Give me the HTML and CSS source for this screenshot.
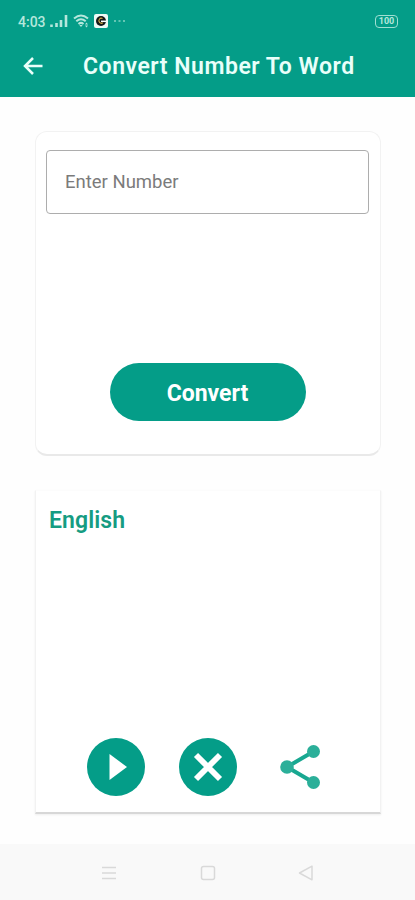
FILE: index.html
```html
<!DOCTYPE html>
<html lang="en">
<head>
<meta charset="utf-8">
<title>Convert Number To Word</title>
<link rel="stylesheet" href="styles.css">
</head>
<body>
<header class="header">
  <div class="status">
    <span class="time">4:03</span>
    <svg class="signal" width="18" height="14" viewBox="0 0 18 14"><path d="M1.500 10.500v2.500M6.500 9v4M11 6v7M16 1v12" stroke="#b5e7dc" stroke-width="2.600"/></svg>
    <svg class="wifi" width="17" height="14" viewBox="0 0 17 14"><g fill="none" stroke="#b5e7dc" stroke-width="2"><path d="M1 4.500Q8 -1.500 15 4.500M3.300 7.300Q8 3.200 12.700 7.300M5.500 10Q8 7.800 10.500 10"/></g><path d="M6.300 11h3.400L8 13zM12 10.500l1.500-2 1.500 2zm0 1l1.500 2 1.500-2z" fill="#b5e7dc"/></svg>
    <svg class="app" width="14" height="14" viewBox="0 0 14 14"><rect width="14" height="14" rx="2" fill="#eefaf5"/><circle cx="7" cy="7" r="5" fill="#15191a"/><path d="M8.500 4.500A2.500 2.500 0 1 0 8.800 8.800" fill="none" stroke="#d7ad48" stroke-width="1.100"/><path d="M7 7.300h5" stroke="#fff" stroke-width="1.500"/></svg>
    <svg class="dots" width="13" height="4" viewBox="0 0 13 4"><path d="M1 2h2M5.500 2h2M10 2h2" stroke="#83d3c2" stroke-width="1.600"/></svg>
    <span class="battery">100</span>
  </div>
  <div class="toolbar">
    <svg class="back" width="22" height="20" viewBox="0 0 22 20"><path d="M20.500 10H3M11 2L3 10l8 8" fill="none" stroke="#e9fffa" stroke-width="2.500"/></svg>
    <h1 class="title">Convert Number To Word</h1>
  </div>
</header>
<main class="main">
  <section class="card entry">
    <input class="field" type="text" placeholder="Enter Number" aria-label="Enter Number">
    <button class="convert">Convert</button>
  </section>
  <section class="card result">
    <h2 class="language">English</h2>
    <div class="actions">
      <svg width="58" height="58" viewBox="0 0 58 58"><circle cx="29" cy="29" r="29" fill="#049d88"/><path d="M22.500 16v26L40 29z" fill="#fff"/></svg>
      <svg width="58" height="58" viewBox="0 0 58 58"><circle cx="29" cy="29" r="29" fill="#049d88"/><path d="M17 17l24 24M41 17L17 41" stroke="#fff" stroke-width="5.800"/></svg>
      <svg class="share" width="42" height="46" viewBox="0 0 42 46"><path d="M34.500 7.500L8 23l26.500 15.500" fill="none" stroke="#18a891" stroke-width="4"/><g fill="#2baf99"><circle cx="34.500" cy="7.500" r="6.500"/><circle cx="8" cy="23" r="6.800"/><circle cx="34.500" cy="38.500" r="6.500"/></g></svg>
    </div>
  </section>
</main>
<nav class="nav">
  <svg width="16" height="16" viewBox="0 0 16 16"><path d="M1 2.500h14M1 8h14M1 13.500h14"/></svg>
  <svg width="16" height="16" viewBox="0 0 16 16"><rect x="1.500" y="1.500" width="13" height="13" rx="2"/></svg>
  <svg width="16" height="16" viewBox="0 0 16 16"><path d="M14 1.200v13.600L1.500 8z" stroke-linejoin="round"/></svg>
</nav>
</body>
</html>
```
FILE: styles.css
```css
* { box-sizing: border-box; }
body {
  margin: 0;
  height: 900px;
  display: flex;
  flex-direction: column;
  overflow: hidden;
  background: #fefefe;
  font-family: Roboto, "Liberation Sans", sans-serif;
}
svg { display: block; flex: none; }
.header {
  height: 97px;
  flex: none;
  background: #049d88;
}
.status {
  height: 42px;
  display: flex;
  align-items: center;
  padding: 0 17px 0 18px;
}
.time {
  width: 27px;
  margin-right: 5px;
  padding-top: 1px;
  color: #b5e7dc;
  font-size: 14px;
  font-weight: 500;
  white-space: nowrap;
}
.wifi { margin-left: 5px; }
.app { margin-left: 4px; }
.dots { margin-left: 5px; }
.battery {
  width: 23px;
  height: 13px;
  margin-left: auto;
  border: 1px solid #a0dfd2;
  border-radius: 4px;
  color: #b5e7dc;
  font-size: 9px;
  font-weight: 700;
  line-height: 11px;
  text-align: center;
}
.toolbar {
  height: 48px;
  display: flex;
  align-items: center;
  padding-left: 22px;
}
.title {
  margin: 0 0 0 39px;
  color: #e9fffa;
  font-size: 23px;
  font-weight: 600;
  letter-spacing: 0.54px;
  white-space: nowrap;
}
.main {
  height: 747px;
  flex: none;
  padding: 34px 34px 0 35px;
}
.card {
  background: #fff;
  border: 1px solid #f2f2f2;
}
.entry {
  height: 325px;
  display: flex;
  flex-direction: column;
  align-items: center;
  justify-content: space-between;
  padding: 18px 11px 33px 10px;
  border-bottom: 2px solid #e9e9e9;
  border-radius: 12px;
}
.field {
  width: 100%;
  height: 64px;
  padding: 0 18px;
  border: 1px solid #adadad;
  border-radius: 4px;
  background: #fff;
  font: 400 18.5px Roboto, sans-serif;
}
.field::placeholder {
  color: #7b7b7b;
  opacity: 1;
}
.convert {
  width: 196px;
  height: 58px;
  padding: 2px 0 0;
  border: 0;
  border-radius: 29px;
  background: #049d88;
  color: #fff;
  font: 700 23px Roboto, sans-serif;
}
.result {
  height: 324px;
  margin-top: 34px;
  padding: 16px 14px 16px 13px;
  display: flex;
  flex-direction: column;
  justify-content: space-between;
  border-top-color: #fcfcfc;
  border-bottom: 2px solid #d7d7d7;
  box-shadow: 0 1px 2px #eeeeee;
}
.language {
  margin: 0;
  color: #169c82;
  font-size: 23px;
  font-weight: 600;
  letter-spacing: 0.1px;
  line-height: 28px;
}
.actions {
  display: flex;
  align-items: center;
  gap: 34px;
  padding-left: 38px;
}
.share { margin-left: 8px; }
.nav {
  flex: 1;
  display: flex;
  align-items: center;
  justify-content: space-between;
  padding: 2px 101px 0;
  background: #f9f9f9;
}
.nav svg {
  fill: none;
  stroke: #d9d9d9;
  stroke-width: 1.5;
}
```
